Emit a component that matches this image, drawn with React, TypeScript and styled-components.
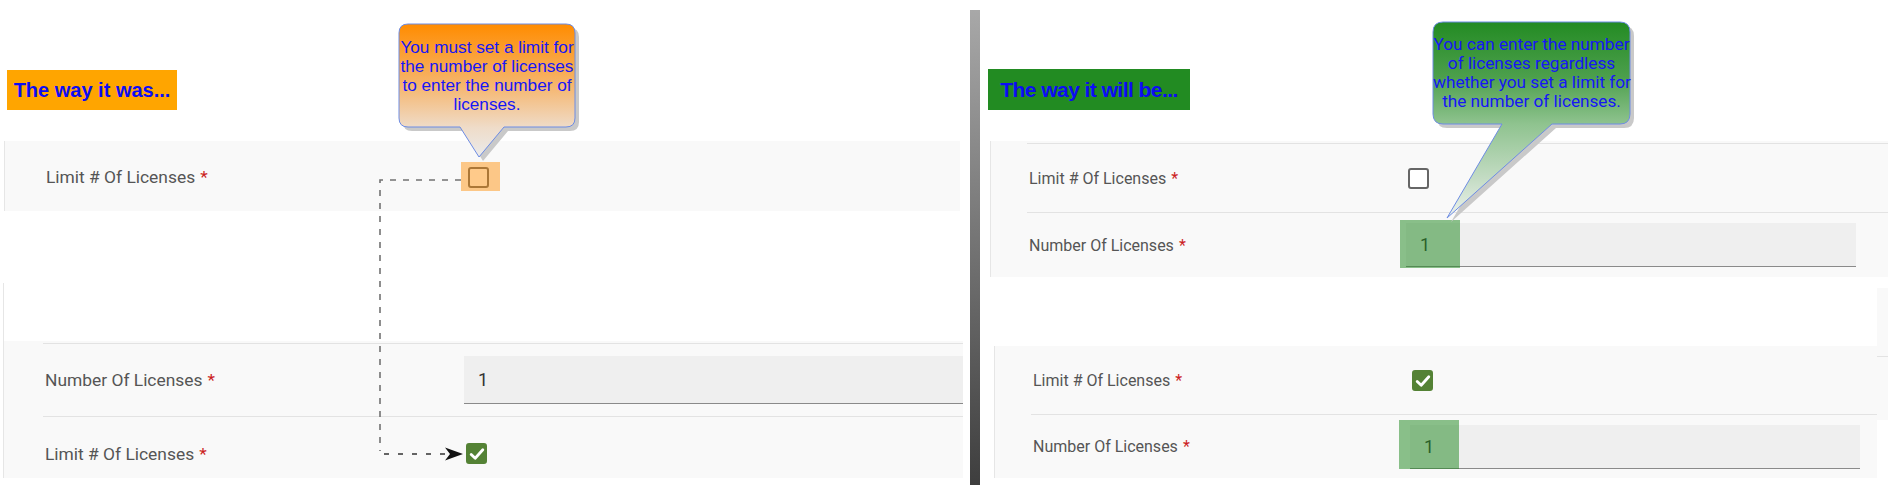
import React from 'react';
import styled, { createGlobalStyle } from 'styled-components';

const GlobalStyle = createGlobalStyle`
  html, body { margin: 0; padding: 0; background: #fff; }
  body { font-family: Roboto, 'Noto Sans', sans-serif; overflow: hidden; }
  * { box-sizing: border-box; }
`;

const Page = styled.div`
  position: relative;
  display: flex;
  width: 1888px;
  height: 485px;
  overflow: hidden;
  background: #fff;
`;

const Half = styled.section<{ $width: number }>`
  flex: none;
  width: ${({ $width }) => $width}px;
  display: flex;
  flex-direction: column;
`;

const Divider = styled.div`
  flex: none;
  width: 10px;
  margin-top: 10px;
  background: linear-gradient(to bottom, #a8a8a8, #3e3e3e);
`;

/** "The way it was / will be" heading chip */
const Banner = styled.div<{ $bg: string; $w: number; $h: number; $top: number; $left: number; $size: number; $track: number }>`
  margin: ${({ $top, $left }) => `${$top}px 0 0 ${$left}px`};
  width: ${({ $w }) => $w}px;
  height: ${({ $h }) => $h}px;
  display: flex;
  align-items: center;
  justify-content: center;
  background: ${({ $bg }) => $bg};
  color: #0c0cf4;
  font-family: 'Liberation Sans', Arial, sans-serif;
  font-weight: bold;
  font-size: ${({ $size }) => $size}px;
  letter-spacing: ${({ $track }) => $track}px;
  white-space: nowrap;
`;

const Group = styled.div<{ $top: number; $left: number; $width?: number; $grow?: boolean }>`
  margin: ${({ $top, $left }) => `${$top}px 0 0 ${$left}px`};
  width: ${({ $width }) => ($width ? `${$width}px` : 'auto')};
  flex: ${({ $grow }) => ($grow ? '1' : 'none')};
  border-left: 1px solid #e6e6e6;
  background: #f9f9f9;
`;

const GroupHead = styled.div`
  height: 58px;
  background: #fff;
`;

const Row = styled.div<{ $pad: number; $padTop?: number }>`
  padding-left: ${({ $pad }) => $pad}px;
  padding-top: ${({ $padTop }) => $padTop ?? 0}px;
  background: #f9f9f9;
`;

const RowInner = styled.div<{ $h: number; $col: number; $line?: boolean; $shift?: number }>`
  display: grid;
  grid-template-columns: ${({ $col }) => $col}px 1fr;
  align-items: center;
  height: ${({ $h }) => $h}px;
  padding-top: ${({ $shift }) => $shift ?? 0}px;
  border-top: 1px solid ${({ $line }) => ($line ? '#e3e3e3' : 'transparent')};
`;

const Label = styled.span<{ $pad: number; $size: number }>`
  padding-left: ${({ $pad }) => $pad}px;
  font-size: ${({ $size }) => $size}px;
  color: #555;
  white-space: nowrap;
`;

const Req = styled.span`
  margin-left: 5px;
  color: #cc1f1f;
`;

const Box = styled.span<{ $checked?: boolean; $ml?: number }>`
  display: inline-flex;
  align-items: center;
  justify-content: center;
  width: 21px;
  height: 21px;
  margin-left: ${({ $ml }) => $ml ?? 0}px;
  border-radius: 3px;
  border: 2px solid ${({ $checked }) => ($checked ? '#548235' : '#666')};
  background: ${({ $checked }) => ($checked ? '#548235' : '#fff')};
`;

/** orange tint laid over the control it points at */
const OrangeMark = styled.span`
  position: relative;
  display: inline-flex;
  justify-self: start;
  padding: 5px 11px 3px 7px;

  &::after {
    content: '';
    position: absolute;
    inset: 0;
    background: rgba(255, 140, 0, 0.46);
  }
`;

const Field = styled.div<{ $w?: number }>`
  position: relative;
  width: ${({ $w }) => ($w ? `${$w}px` : 'auto')};
  height: 100%;
  display: flex;
  align-items: center;
  padding-left: 14px;
  background: #efefef;
  border-bottom: 1px solid #8a8a8a;
  font-size: 18px;
  color: #333;
`;

const FieldWrap = styled.div<{ $h: number; $w?: number }>`
  height: ${({ $h }) => $h}px;
  width: ${({ $w }) => ($w ? `${$w}px` : 'auto')};
`;

const GreenMark = styled.span<{ $l: number; $t: number; $b: number }>`
  position: absolute;
  left: ${({ $l }) => $l}px;
  top: ${({ $t }) => $t}px;
  bottom: ${({ $b }) => $b}px;
  width: 60px;
  background: rgba(34, 139, 34, 0.52);
`;

const BottomArea = styled.div`
  display: flex;
  align-items: flex-start;
  margin-top: 11px;
`;

const Sliver = styled.div`
  flex: none;
  width: 11px;
  height: 132px;
  background: linear-gradient(to bottom, #f9f9f9 0 68px, #e3e3e3 68px 69px, #f9f9f9 69px);
`;

const Callout = styled.div<{ $x: number; $y: number; $w: number; $h: number }>`
  position: absolute;
  left: ${({ $x }) => $x}px;
  top: ${({ $y }) => $y}px;
  width: ${({ $w }) => $w}px;
  height: ${({ $h }) => $h}px;

  & > svg {
    position: absolute;
    inset: 0;
  }
`;

const CalloutText = styled.div<{ $x: number; $y: number; $w: number; $font: string; $size: number }>`
  position: absolute;
  left: ${({ $x }) => $x}px;
  top: ${({ $y }) => $y}px;
  width: ${({ $w }) => $w}px;
  text-align: center;
  font-family: ${({ $font }) => $font};
  font-size: ${({ $size }) => $size}px;
  line-height: 19px;
  color: #1616f6;
  white-space: nowrap;
`;

const Overlay = styled.svg`
  position: absolute;
  left: 0;
  top: 0;
  pointer-events: none;
`;

function bubblePath(x0: number, y0: number, x1: number, y1: number, r: number, tl: number, tr: number, tx: number, ty: number) {
  return `M${x0 + r},${y0} H${x1 - r} Q${x1},${y0} ${x1},${y0 + r} V${y1 - r} Q${x1},${y1} ${x1 - r},${y1} H${tr} L${tx},${ty} L${tl},${y1} H${x0 + r} Q${x0},${y1} ${x0},${y1 - r} V${y0 + r} Q${x0},${y0} ${x0 + r},${y0} Z`;
}

type Stop = [number, string];

function Bubble(props: {
  id: string; x: number; y: number; w: number; h: number; path: string; stops: Stop[];
  text: string[]; tx: number; ty: number; tw: number; font: string; size: number;
}) {
  const { id, x, y, w, h, path, stops, text, tx, ty, tw, font, size } = props;
  return (
    <Callout $x={x} $y={y} $w={w} $h={h}>
      <svg width={w} height={h} viewBox={`0 0 ${w} ${h}`}>
        <defs>
          <linearGradient id={id} x1="0" y1="0" x2="0" y2="1">
            {stops.map(([o, c]) => <stop key={o} offset={o} stopColor={c} />)}
          </linearGradient>
        </defs>
        <path d={path} fill="#c9c9c9" transform="translate(4 4)" />
        <path d={path} fill={`url(#${id})`} stroke="#6d8ce4" strokeWidth="1" />
      </svg>
      <CalloutText $x={tx} $y={ty} $w={tw} $font={font} $size={size}>
        {text.map((t) => <div key={t}>{t}</div>)}
      </CalloutText>
    </Callout>
  );
}

const Check = () => (
  <svg width="16" height="16" viewBox="0 0 16 16">
    <polyline points="2.2,8.4 6.2,12.2 13.8,3.8" fill="none" stroke="#fff" strokeWidth="2.8" strokeLinecap="round" strokeLinejoin="round" />
  </svg>
);

const LabelText = ({ pad, size, children }: { pad: number; size: number; children: string }) => (
  <Label $pad={pad} $size={size}>
    {children}
    <Req>*</Req>
  </Label>
);

const OLD = 17.4;
const NEW = 16;

export default function App() {
  return (
    <>
      <GlobalStyle />
      <Page>
        <Half $width={970}>
          <Banner $bg="#ffa500" $w={170} $h={40} $top={70} $left={7} $size={20} $track={0}>
            The way it was...
          </Banner>

          <Group $top={31} $left={4} $width={956}>
            <Row $pad={38}>
              <RowInner $h={70} $col={418}>
                <LabelText pad={3} size={OLD}>Limit # Of Licenses</LabelText>
                <OrangeMark>
                  <Box />
                </OrangeMark>
              </RowInner>
            </Row>
          </Group>

          <Group $top={72} $left={3} $width={960}>
            <GroupHead />
            <Row $pad={39} $padTop={2}>
              <RowInner $h={73} $col={421} $line>
                <LabelText pad={2} size={OLD}>Number Of Licenses</LabelText>
                <FieldWrap $h={48}>
                  <Field>1</Field>
                </FieldWrap>
              </RowInner>
            </Row>
            <Row $pad={39}>
              <RowInner $h={62} $col={421} $line $shift={12}>
                <LabelText pad={2} size={OLD}>Limit # Of Licenses</LabelText>
                <Box $checked $ml={2}>
                  <Check />
                </Box>
              </RowInner>
            </Row>
          </Group>
        </Half>

        <Divider />

        <Half $width={908}>
          <Banner $bg="#228b22" $w={202} $h={41} $top={69} $left={8} $size={21} $track={-0.55}>
            The way it will be...
          </Banner>

          <Group $top={31} $left={10}>
            <Row $pad={36} $padTop={2}>
              <RowInner $h={69} $col={379} $line>
                <LabelText pad={2} size={NEW}>Limit # Of Licenses</LabelText>
                <Box $ml={2} />
              </RowInner>
            </Row>
            <Row $pad={36}>
              <RowInner $h={65} $col={379} $line>
                <LabelText pad={2} size={NEW}>Number Of Licenses</LabelText>
                <FieldWrap $h={44} $w={450}>
                  <Field $w={450}>
                    1
                    <GreenMark $l={-6} $t={-3} $b={-2} />
                  </Field>
                </FieldWrap>
              </RowInner>
            </Row>
          </Group>

          <BottomArea>
            <Group $top={58} $left={14} $grow>
              <Row $pad={36}>
                <RowInner $h={68} $col={379}>
                  <LabelText pad={2} size={NEW}>Limit # Of Licenses</LabelText>
                  <Box $checked $ml={2}>
                    <Check />
                  </Box>
                </RowInner>
              </Row>
              <Row $pad={36}>
                <RowInner $h={64} $col={379} $line>
                  <LabelText pad={2} size={NEW}>Number Of Licenses</LabelText>
                  <FieldWrap $h={44} $w={450}>
                    <Field $w={450}>
                      1
                      <GreenMark $l={-11} $t={-5} $b={-1} />
                    </Field>
                  </FieldWrap>
                </RowInner>
              </Row>
            </Group>
            <Sliver />
          </BottomArea>
        </Half>

        <Overlay width={1888} height={485} viewBox="0 0 1888 485">
          <path d="M461 180 H380 V451" fill="none" stroke="#727272" strokeWidth="1.6" strokeDasharray="6 7" />
          <path d="M384 454 H446" fill="none" stroke="#333" strokeWidth="1.4" strokeDasharray="5 9" />
          <polygon points="445,447.5 463,454 445,460.5 450,454" fill="#111" />
        </Overlay>

        <Bubble
          id="warnFill"
          x={395}
          y={20}
          w={192}
          h={145}
          path={bubblePath(4, 4, 180, 107, 9, 65, 109, 84, 137)}
          stops={[[0, '#ff8c00'], [0.45, '#f6b46a'], [0.78, '#efdcc9'], [1, '#ebebeb']]}
          text={['You must set a limit for', 'the number of licenses', 'to enter the number of', 'licenses.']}
          tx={4}
          ty={18}
          tw={176}
          font="'Liberation Sans', Arial, sans-serif"
          size={17.2}
        />

        <Bubble
          id="okFill"
          x={1429}
          y={18}
          w={212}
          h={206}
          path={bubblePath(4, 4, 201, 106, 10, 73, 123, 18, 200)}
          stops={[[0, '#238b23'], [0.28, '#4c9f4c'], [0.52, '#8fc38f'], [0.8, '#c4dcc4'], [1, '#eef3ee']]}
          text={['You can enter the number', 'of licenses regardless', 'whether you set a limit for', 'the number of licenses.']}
          tx={4}
          ty={17}
          tw={197}
          font="Roboto, sans-serif"
          size={17.2}
        />
      </Page>
    </>
  );
}
